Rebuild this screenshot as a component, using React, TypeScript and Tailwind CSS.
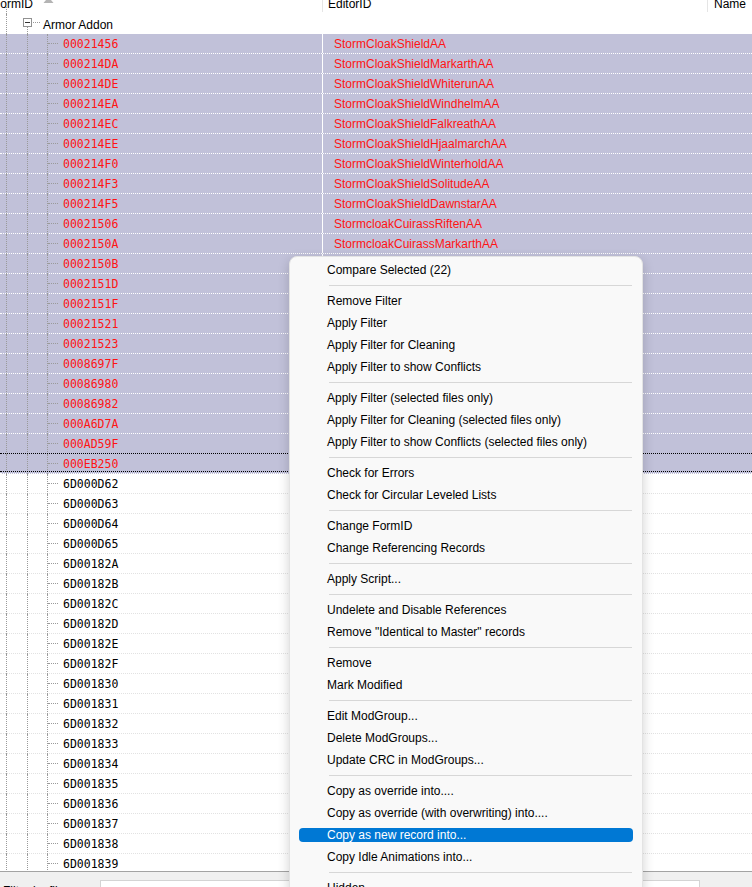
import React from 'react';

// editor ids of rows that sit under the context menu are not shown
const SELECTED: [string, string][] = [
  ['00021456', 'StormCloakShieldAA'],
  ['000214DA', 'StormCloakShieldMarkarthAA'],
  ['000214DE', 'StormCloakShieldWhiterunAA'],
  ['000214EA', 'StormCloakShieldWindhelmAA'],
  ['000214EC', 'StormCloakShieldFalkreathAA'],
  ['000214EE', 'StormCloakShieldHjaalmarchAA'],
  ['000214F0', 'StormCloakShieldWinterholdAA'],
  ['000214F3', 'StormCloakShieldSolitudeAA'],
  ['000214F5', 'StormCloakShieldDawnstarAA'],
  ['00021506', 'StormcloakCuirassRiftenAA'],
  ['0002150A', 'StormcloakCuirassMarkarthAA'],
  ['0002150B', ''],
  ['0002151D', ''],
  ['0002151F', ''],
  ['00021521', ''],
  ['00021523', ''],
  ['0008697F', ''],
  ['00086980', ''],
  ['00086982', ''],
  ['000A6D7A', ''],
  ['000AD59F', ''],
  ['000EB250', ''],
];

const OTHERS = [
  '6D000D62', '6D000D63', '6D000D64', '6D000D65', '6D00182A', '6D00182B', '6D00182C',
  '6D00182D', '6D00182E', '6D00182F', '6D001830', '6D001831', '6D001832', '6D001833',
  '6D001834', '6D001835', '6D001836', '6D001837', '6D001838', '6D001839',
];

// '-' = separator
const MENU = [
  'Compare Selected (22)',
  '-',
  'Remove Filter',
  'Apply Filter',
  'Apply Filter for Cleaning',
  'Apply Filter to show Conflicts',
  '-',
  'Apply Filter (selected files only)',
  'Apply Filter for Cleaning (selected files only)',
  'Apply Filter to show Conflicts (selected files only)',
  '-',
  'Check for Errors',
  'Check for Circular Leveled Lists',
  '-',
  'Change FormID',
  'Change Referencing Records',
  '-',
  'Apply Script...',
  '-',
  'Undelete and Disable References',
  'Remove "Identical to Master" records',
  '-',
  'Remove',
  'Mark Modified',
  '-',
  'Edit ModGroup...',
  'Delete ModGroups...',
  'Update CRC in ModGroups...',
  '-',
  'Copy as override into....',
  'Copy as override (with overwriting) into....',
  'Copy as new record into...',
  'Copy Idle Animations into...',
  '-',
  'Hidden',
];

const HOT = 'Copy as new record into...';

function Row({ id, editorId, sel, focus }: { id: string; editorId?: string; sel: boolean; focus?: boolean }) {
  return (
    <div
      className={`relative flex h-5 border-b border-dotted ${
        sel ? 'border-white bg-[#c1c1d9]' : 'border-[#e2e2e2] bg-white'
      }`}
    >
      {/* tree connectors */}
      <span className="absolute left-[6px] top-0 h-5 border-l border-dotted border-[#9a9a9a]" />
      <span className="absolute left-[27px] top-0 h-5 border-l border-dotted border-[#9a9a9a]" />
      <span className="absolute left-[47px] top-0 h-5 border-l border-dotted border-[#9a9a9a]" />
      <span className="absolute left-[48px] top-[9px] w-[10px] border-t border-dotted border-[#9a9a9a]" />
      <div
        className={`w-[322px] shrink-0 pl-[63px] pt-px font-['DejaVu_Sans_Mono',monospace] text-[11.5px] leading-[18px] ${
          sel ? 'text-[#ff1414]' : 'text-black'
        }`}
      >
        {id}
      </div>
      <div className={`w-px shrink-0 ${sel ? 'bg-white' : 'bg-[#f0f0f0]'}`} />
      <div className="flex-1 pl-[11px] pt-px text-[12px] leading-[18px] text-[#ff1414]">{editorId}</div>
      {focus && <span className="pointer-events-none absolute inset-x-0 -top-px bottom-px border-y border-dotted border-black" />}
    </div>
  );
}

function ContextMenu() {
  return (
    <div className="absolute left-[289px] top-[256px] h-[660px] w-[354px] rounded-lg border border-[#e3e3e3] bg-[#f9f9f9] pt-[2px] shadow-[0_4px_12px_rgba(0,0,0,0.18)]">
      {MENU.map((m, i) =>
        m === '-' ? (
          <div key={i} className="flex h-[9px] items-center pl-[39px] pr-[10px]">
            <div className="h-px w-full bg-[#d7d7d7]" />
          </div>
        ) : (
          <div key={i} className="relative flex h-[22px] items-center pl-[37px] text-[12px] text-black">
            {m === HOT && <span className="absolute inset-x-[9px] top-[4px] bottom-[4px] rounded-[4px] bg-[#0078d4]" />}
            <span className={`relative whitespace-pre ${m === HOT ? 'text-white' : ''}`}>{m}</span>
          </div>
        ),
      )}
    </div>
  );
}

export default function App() {
  return (
    <div className="relative flex h-[887px] w-[752px] flex-col overflow-hidden bg-white font-['Liberation_Sans',Arial,sans-serif]">
      <div className="h-[871px] overflow-hidden">
        <div className="-mt-[7px]">
          {/* column header */}
          <div className="relative flex h-[21px] bg-white text-[12px] text-black">
            <span className="absolute left-[6px] top-[14px] h-[7px] border-l border-dotted border-[#9a9a9a]" />
            <div className="relative flex w-[322px] shrink-0 items-center">
              <span className="-ml-[7px]">FormID</span>
              <svg className="absolute left-[43px] top-[4px]" width="11" height="7" viewBox="0 0 11 7">
                <path d="M5.5 0 L10.5 6 L0.5 6 Z" fill="#b4b4b4" />
              </svg>
            </div>
            <div className="my-[2px] w-px bg-[#e5e5e5]" />
            <div className="flex w-[384px] items-center pl-[5px]">EditorID</div>
            <div className="my-[2px] w-px bg-[#e5e5e5]" />
            <div className="flex items-center pl-[6px]">Name</div>
          </div>

          {/* group node */}
          <div className="relative flex h-5 bg-white">
            <span className="absolute left-[6px] top-0 h-5 border-l border-dotted border-[#9a9a9a]" />
            <span className="absolute left-[27px] top-[13px] h-[7px] border-l border-dotted border-[#9a9a9a]" />
            <span className="absolute left-[23px] top-[4px] flex h-[9px] w-[9px] items-center justify-center border border-[#919191] bg-white">
              <span className="h-px w-[5px] bg-[#333]" />
            </span>
            <span className="absolute left-[33px] top-[8px] w-[7px] border-t border-dotted border-[#9a9a9a]" />
            <span className="pl-[43px] pt-[2px] text-[12px] leading-[18px] text-black">Armor Addon</span>
          </div>

          {SELECTED.map(([id, ed], i) => (
            <Row key={id} id={id} editorId={ed} sel focus={i === SELECTED.length - 1} />
          ))}
          {OTHERS.map((id) => (
            <Row key={id} id={id} sel={false} />
          ))}
        </div>
      </div>

      {/* filter bar */}
      <div className="flex h-[16px] border-t border-[#a3a3a3] bg-[#f0f0f0]">
        <span className="w-[100px] shrink-0 pl-[3px] pt-[12px] text-[12px] leading-[14px] text-black">Filter by file:</span>
        <div className="mt-[8px] h-[22px] w-[600px] border border-[#d4d4d4] bg-white" />
      </div>

      <ContextMenu />
    </div>
  );
}
